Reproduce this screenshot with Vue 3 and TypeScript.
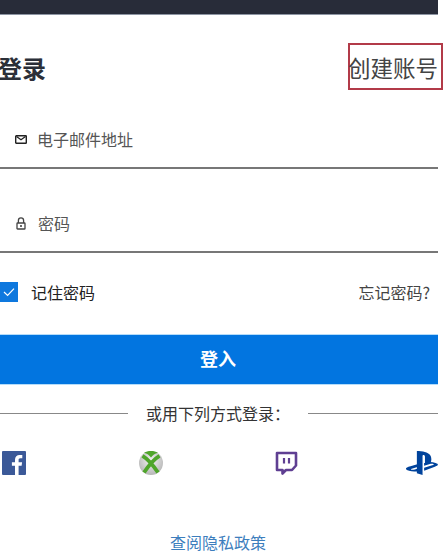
<template>
  <div class="page">
    <div class="topbar"></div>
    <header class="head">
      <h1 class="title">登录</h1>
      <a class="create"><span class="create-text">创建账号</span></a>
    </header>

    <label class="field field-email">
      <svg class="field-icon" viewBox="0 0 12 9" width="12" height="9">
        <rect x="0.7" y="0.7" width="10.600" height="7.600" rx="0.6" fill="none" stroke="#222" stroke-width="1.400" />
        <path d="M1.500 1.500L6 4.800l4.500-3.300" fill="none" stroke="#222" stroke-width="1.300" />
      </svg>
      <span>电子邮件地址</span>
    </label>
    <label class="field field-password">
      <svg class="field-icon" viewBox="0 0 10 13" width="10" height="13">
        <path d="M2.400 6V3.400a2.600 2.600 0 0 1 5.200 0V6" fill="none" stroke="#444" stroke-width="1.300" />
        <rect x="1" y="6" width="8" height="6" rx="0.6" fill="none" stroke="#444" stroke-width="1.300" />
        <rect x="4.200" y="8" width="1.600" height="2" fill="#444" />
      </svg>
      <span>密码</span>
    </label>

    <div class="options">
      <label class="remember">
        <span class="check">
          <svg viewBox="0 0 18 20" width="18" height="20">
            <path d="M4 10l3.600 3.400L14 6.600" fill="none" stroke="#fff" stroke-width="1.200" />
          </svg>
        </span>
        <span>记住密码</span>
      </label>
      <a class="forgot">忘记密码?</a>
    </div>

    <button class="submit">登入</button>

    <div class="divider">
      <span class="line"></span>
      <span class="divider-text">或用下列方式登录：</span>
      <span class="line"></span>
    </div>

    <div class="socials">
      <svg viewBox="0 0 24 24" width="24" height="24">
        <rect width="24" height="24" rx="1" fill="#3b5998" />
        <path d="M16.600 24v-9.200h3l.5-3.600h-3.500V9c0-1 .3-1.700 1.800-1.700h1.900V4.100c-.3 0-1.400-.1-2.700-.1-2.700 0-4.600 1.700-4.600 4.700v2.500h-3.100v3.600h3.100V24z" fill="#fff" />
      </svg>
      <svg class="xbox" viewBox="0 0 24 24" width="24" height="24">
        <defs>
          <radialGradient id="xbox-ball" cx="50%" cy="40%" r="62%">
            <stop offset="0%" stop-color="#f4f4f4" />
            <stop offset="100%" stop-color="#b4b4b4" />
          </radialGradient>
        </defs>
        <circle cx="12" cy="12" r="12" fill="url(#xbox-ball)" />
        <path d="M5 1.800C8 2.300 10.500 4.500 12 6.500c1.500-2 4-4.200 7-4.700C17 .6 14.600 0 12 0S7 .6 5 1.800z" fill="#4fa52b" />
        <path d="M3.500 4.800C9 8 14 14 19 21.500M20.500 4.800C15 8 10 14 5 21.500" fill="none" stroke="#4fa52b" stroke-width="3.800" />
      </svg>
      <svg class="twitch" viewBox="0 0 24 24" width="24" height="24">
        <path d="M3 2h19v12.500l-4 4.500h-6l-3.500 3.500V19H3z" fill="none" stroke="#5f3f92" stroke-width="2.600" stroke-linejoin="round" />
        <path d="M10 7v5.500M15 7v5.500" stroke="#5f3f92" stroke-width="2.200" />
      </svg>
      <svg class="playstation" viewBox="3 0 26.500 23.200" width="32" height="24" preserveAspectRatio="none">
        <path d="M12 0v21.600l4.700 1.500V5.100c0-.9.400-1.400 1-1.200.8.200 1 1 1 1.900v6.100c3 1.400 5.300 0 5.300-3.800 0-4-1.400-5.800-5.400-7.200C16.900.4 14 0 12 0z" fill="#00439c" />
        <path d="M18 16.200l7.400-2.700c.9-.3 1-.8.300-1-.7-.3-2-.2-2.900.1L18 14.300v-2.700l.3-.1s1.300-.5 3.200-.7c1.900-.2 4.200 0 6 .7 2 .7 2.200 1.600 1.700 2.300-.5.600-1.800 1.100-1.800 1.100L18 19.100zM5 18.900c-2.200-.6-2.500-1.900-1.500-2.600.9-.7 2.500-1.200 2.500-1.200l6.400-2.300v2.700l-4.600 1.600c-.8.300-.9.800-.3 1 .7.200 1.900.2 2.800-.1l2.100-.8v2.400l-.4.100c-2.100.3-4.400.2-6.500-.5z" fill="#00439c" />
      </svg>
    </div>

    <a class="privacy">查阅隐私政策</a>
  </div>
</template>

<script setup lang="ts">
</script>

<style>
html,
body {
  background: #fff;
  overflow: hidden;
}
</style>

<style scoped>
.page {
  width: 440px;
  height: 557px;
  margin-left: -2px;
  font-family: "Noto Sans CJK SC", "Liberation Sans", sans-serif;
  color: #333;
  background: #fff;
}

.topbar {
  height: 14px;
  background: #282c39;
  border-bottom: 1px solid #8d95a3;
}

.head {
  display: flex;
  align-items: center;
  justify-content: space-between;
  height: 47px;
  margin-top: 28px;
}

.title {
  margin: 0;
  padding-top: 2px;
  font-size: 24px;
  font-weight: 700;
  color: #2b2f38;
}

.create {
  display: flex;
  align-items: center;
  box-sizing: border-box;
  width: 95px;
  height: 47px;
  margin-right: -5px;
  border: 2px solid #b23a48;
  font-size: 22.500px;
  color: #444;
  white-space: nowrap;
}

.create-text {
  margin-left: -2px;
}

.field {
  display: flex;
  align-items: center;
  gap: 10px;
  box-sizing: border-box;
  padding-left: 17px;
  font-size: 16px;
  color: #555;
  border-bottom: 2px solid #777;
}

.field-email {
  height: 62px;
  margin-top: 17px;
  padding-top: 4px;
}

.field-password {
  height: 84px;
  padding-top: 26px;
  padding-left: 18px;
  gap: 12px;
}

.options {
  display: flex;
  align-items: center;
  justify-content: space-between;
  margin-top: 29px;
  height: 20px;
  padding-right: 8px;
}

.remember {
  display: flex;
  align-items: center;
  gap: 13px;
  padding-left: 2px;
  font-size: 16px;
  color: #222;
}

.check {
  display: block;
  width: 18px;
  height: 20px;
  background: #0e78de;
}

.forgot {
  font-size: 16px;
  color: #444;
}

.submit {
  display: block;
  width: 100%;
  height: 49px;
  margin-top: 33px;
  padding: 0 0 3px;
  border: none;
  background: #0275e0;
  box-shadow: 0 1px 0 #b4dcfa, 0 -1px 0 #b4dcfa;
  color: #fff;
  font-family: inherit;
  font-size: 18px;
  font-weight: 700;
}

.divider {
  display: flex;
  align-items: center;
  gap: 18px;
  margin-top: 18px;
  height: 22px;
}

.line {
  flex: 1;
  height: 1px;
  background: #888;
}

.divider-text {
  font-size: 16px;
  color: #333;
}

.socials {
  display: flex;
  align-items: center;
  margin-top: 27px;
  padding-left: 4px;
}

.socials svg {
  display: block;
  flex: none;
}

.xbox {
  margin-left: 113px;
}

.twitch {
  margin-left: 111px;
}

.playstation {
  margin-left: auto;
}

.privacy {
  display: block;
  margin-top: 55px;
  text-align: center;
  font-size: 16px;
  color: #3d7ebd;
}
</style>
